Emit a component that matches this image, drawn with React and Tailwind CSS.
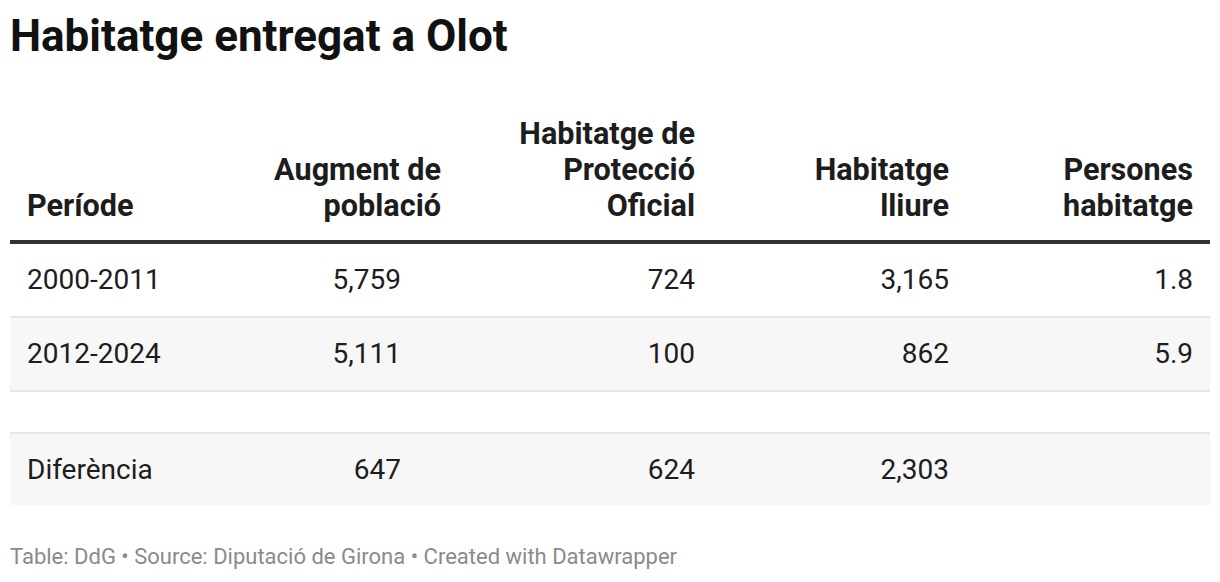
import React from "react";

const cols = "grid grid-cols-[224px_224px_254px_254px_244px]";

const rows = [
  { period: "2000-2011", augment: "5,759", hpo: "724", lliure: "3,165", persones: "1.8", shade: false },
  { period: "2012-2024", augment: "5,111", hpo: "100", lliure: "862", persones: "5.9", shade: true },
];

const Row = ({ row }) => (
  <div
    className={`${cols} h-[74px] items-center border-b-2 border-[#e6e6e6] ${row.shade ? "bg-[#f7f7f7]" : "bg-white"}`}
  >
    <div className="pl-[17px]">{row.period}</div>
    <div className="text-right pr-[57px]">{row.augment}</div>
    <div className="text-right pr-[17px]">{row.hpo}</div>
    <div className="text-right pr-[17px]">{row.lliure}</div>
    <div className="text-right pr-[17px]">{row.persones}</div>
  </div>
);

const App = () => {
  return (
    <div className="w-[1220px] h-[582px] bg-white px-[10px] pt-[10px] font-['Roboto',sans-serif] text-[#1d1d1d]">
      <h1 className="text-[44px] leading-[1.2] font-bold text-[#111]">Habitatge entregat a Olot</h1>

      <div className="mt-[53px] text-[28px] leading-[35px]">
        {/* header */}
        <div className={`${cols} items-end font-bold text-[30.6px] leading-[36px] pb-[16px] border-b-4 border-[#333]`}>
          <div className="pl-[17px]">Període</div>
          <div className="text-right pr-[17px]">
            Augment de
            <br />
            població
          </div>
          <div className="text-right pr-[17px]">
            Habitatge de
            <br />
            Protecció
            <br />
            Oficial
          </div>
          <div className="text-right pr-[17px]">
            Habitatge
            <br />
            lliure
          </div>
          <div className="text-right pr-[17px]">
            Persones
            <br />
            habitatge
          </div>
        </div>

        {rows.map((row) => (
          <Row key={row.period} row={row} />
        ))}

        <div className="h-[42px] border-b-2 border-[#e6e6e6]" />

        <div className={`${cols} h-[71px] items-center bg-[#f7f7f7]`}>
          <div className="pl-[17px]">Diferència</div>
          <div className="text-right pr-[57px]">647</div>
          <div className="text-right pr-[17px]">624</div>
          <div className="text-right pr-[17px]">2,303</div>
          <div className="text-right pr-[17px]"></div>
        </div>
      </div>

      <p className="mt-[39px] text-[22px] leading-[1.2] text-[#8a8a8a]">
        Table: DdG • Source: Diputació de Girona • Created with Datawrapper
      </p>
    </div>
  );
};

export default App;
